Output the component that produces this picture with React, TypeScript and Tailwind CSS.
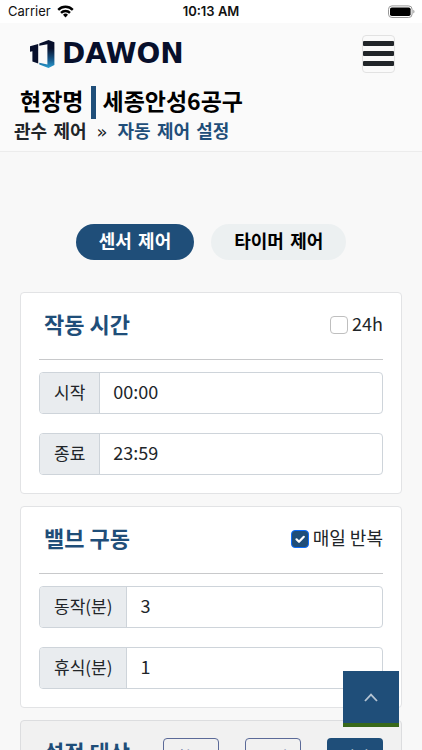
import React, { useId } from "react";
import type { ReactNode } from "react";

function StatusBar() {
  return (
    <div className="relative flex h-[23px] shrink-0 items-center justify-between bg-white pr-[7px] pl-2 font-['Inter',sans-serif] text-[13px] text-[#111]">
      <div className="flex items-center gap-[6px]">
        <span>Carrier</span>
        <svg width="17" height="13" viewBox="0 0 17 13" fill="none" stroke="#000" strokeWidth="2.4">
          <path d="M1.2 4.8a10.4 10.4 0 0 1 14.6 0" />
          <path d="M4 7.8a6.4 6.4 0 0 1 9 0" />
          <path d="M8.5 12.4 6 9.8a3.6 3.6 0 0 1 5 0z" fill="#000" stroke="none" />
        </svg>
      </div>
      <span className="absolute inset-x-0 text-center font-semibold">10:13 AM</span>
      <svg width="27" height="14" viewBox="0 0 27 14">
        <rect x="0.5" y="0.9" width="23.6" height="11.6" rx="3.4" fill="none" stroke="#999" />
        <rect x="2" y="2.4" width="20.6" height="8.6" rx="1.8" fill="#000" />
        <path d="M25.3 4.8c1.6.6 1.6 3.2 0 3.8z" fill="#999" />
      </svg>
    </div>
  );
}

function Logo() {
  return (
    <a href="#" className="flex items-center gap-[7px] text-[#070f2b]">
      <svg width="26" height="30" viewBox="0 0 26 30">
        <defs>
          <linearGradient id="door" x1="0" y1="0" x2="0" y2="1">
            <stop offset="0.3" stopColor="#070f2b" />
            <stop offset="0.7" stopColor="#17588a" />
            <stop offset="1" stopColor="#2a9fd2" />
          </linearGradient>
        </defs>
        <path d="M1 7.2 9.2 5V24.4L3.4 22.6V12.2L1 12.8z" fill="#070f2b" />
        <path d="M10.3 4.5 19.5 1 25.4 3.2V26L19.5 29 10.3 25.6V23.8L18.4 25.4V5.2L10.3 6.8z" fill="url(#door)" />
      </svg>
      <span className="font-['DejaVu_Sans',sans-serif] text-[28px] leading-8 font-bold">DAWON</span>
    </a>
  );
}

function Card({ title, option, checked, children }: { title: string; option: string; checked?: boolean; children: ReactNode }) {
  return (
    <section className="rounded border border-[#e2e3e5] bg-white px-[18px] pt-4 pb-[18px]">
      <div className="flex h-[51px] items-start justify-between border-b border-[#c8c9cb] pl-[5px]">
        <h2 className="text-[22px] leading-7 font-bold text-[#1f4e79]">{title}</h2>
        <label className="flex items-center gap-1 text-[18px] leading-7">
          <span className="relative mt-1 flex size-[18px]">
            <input
              type="checkbox"
              defaultChecked={checked}
              className="peer size-[18px] appearance-none rounded border border-[#bfbfbf] bg-white checked:border-[#0d6efd] checked:bg-[#1f4e79]"
            />
            <svg viewBox="0 0 18 18" className="pointer-events-none absolute inset-0 hidden size-[18px] peer-checked:block" fill="none" stroke="#fff" strokeWidth="2.2" strokeLinecap="round" strokeLinejoin="round">
              <path d="m5.5 9.3 2.5 2.5 4.8-5" />
            </svg>
          </span>
          {option}
        </label>
      </div>
      <div className="mt-3 flex flex-col gap-[19px]">{children}</div>
    </section>
  );
}

function Field({ label, value }: { label: string; value: string }) {
  const id = useId();
  return (
    <div className="flex h-[42px] overflow-hidden rounded border border-[#ced4da] bg-white leading-7">
      <label htmlFor={id} className="flex shrink-0 items-center border-r border-[#ced4da] bg-[#e9ecef] px-[14px] pb-[2px] text-[17px]">
        {label}
      </label>
      <input id={id} defaultValue={value} className="min-w-0 flex-1 px-[13px] pb-1 text-[18px] outline-none" />
    </div>
  );
}

export default function App() {
  return (
    <div className="flex h-screen flex-col overflow-hidden bg-[#f8f8f8] font-['Noto_Sans_CJK_KR',sans-serif] text-[#212529]">
      <StatusBar />
      <header className="shrink-0 border-b border-[#ececec] bg-[#fafafa]">
        <div className="flex h-[61px] items-center justify-between pr-[27px] pl-[29px]">
          <Logo />
          <button aria-label="메뉴" className="flex h-[38px] w-[33px] flex-col items-center justify-center gap-[5px] rounded border border-[#e2e2e2]">
            <span className="h-[5px] w-[31px] shrink-0 rounded-[1px] bg-[#212529]" />
            <span className="h-[5px] w-[31px] shrink-0 rounded-[1px] bg-[#212529]" />
            <span className="h-[5px] w-[31px] shrink-0 rounded-[1px] bg-[#212529]" />
          </button>
        </div>
        <h1 className="flex h-9 items-center gap-[6px] pl-5 text-[23px] leading-8 font-bold text-black">
          <span className="pb-1">현장명</span>
          <span className="ml-[2px] h-[33px] w-[5px] bg-[#1f4e79]" />
          <span className="pb-1">세종안성6공구</span>
        </h1>
        <nav className="flex h-[31px] items-start gap-[10px] pl-[14px] font-['DejaVu_Sans','Noto_Sans_CJK_KR',sans-serif] text-[18px] leading-6">
          <a href="#" className="font-bold">관수 제어</a>
          <span>»</span>
          <a href="#" className="font-bold text-[#1f4e79]">자동 제어 설정</a>
        </nav>
      </header>
      <main className="px-5">
        <div className="mt-[72px] flex justify-center gap-[17px] font-['DejaVu_Sans','Noto_Sans_CJK_KR',sans-serif] text-[18px] leading-7 font-bold">
          <button className="h-9 rounded-full bg-[#1f4e79] px-[23px] text-white">센서 제어</button>
          <button className="h-9 rounded-full bg-[#ecf0f1] px-[23px] text-black">타이머 제어</button>
        </div>
        <div className="mt-8 flex flex-col gap-3">
          <Card title="작동 시간" option="24h">
            <Field label="시작" value="00:00" />
            <Field label="종료" value="23:59" />
          </Card>
          <Card title="밸브 구동" option="매일 반복" checked>
            <Field label="동작(분)" value="3" />
            <Field label="휴식(분)" value="1" />
          </Card>
          <section className="flex items-start justify-between rounded border border-[#dcdddf] bg-[#f1f1f1] px-[18px] pt-4 pb-[18px]">
            <h2 className="pl-[5px] text-[22px] leading-7 font-bold text-[#1f4e79]">설정 대상</h2>
            <div className="flex gap-[26px] pt-px text-[16px]">
              <button className="h-9 w-14 rounded border border-[#5b6a98] text-[#5b6a98]">취소</button>
              <button className="h-9 w-14 rounded border border-[#5b6a98] text-[#5b6a98]">수정</button>
              <button className="h-9 w-14 rounded bg-[#1f4e79] text-white">저장</button>
            </div>
          </section>
        </div>
      </main>
      <button aria-label="맨 위로" className="fixed right-[23px] bottom-[23px] flex size-14 items-center justify-center border-b-4 border-[#38681a] bg-[#1f4e79]">
        <svg width="14" height="9" viewBox="0 0 14 9" fill="none" stroke="#b5c4d3" strokeWidth="1.8">
          <path d="m1 8 6-6.4L13 8" />
        </svg>
      </button>
    </div>
  );
}
